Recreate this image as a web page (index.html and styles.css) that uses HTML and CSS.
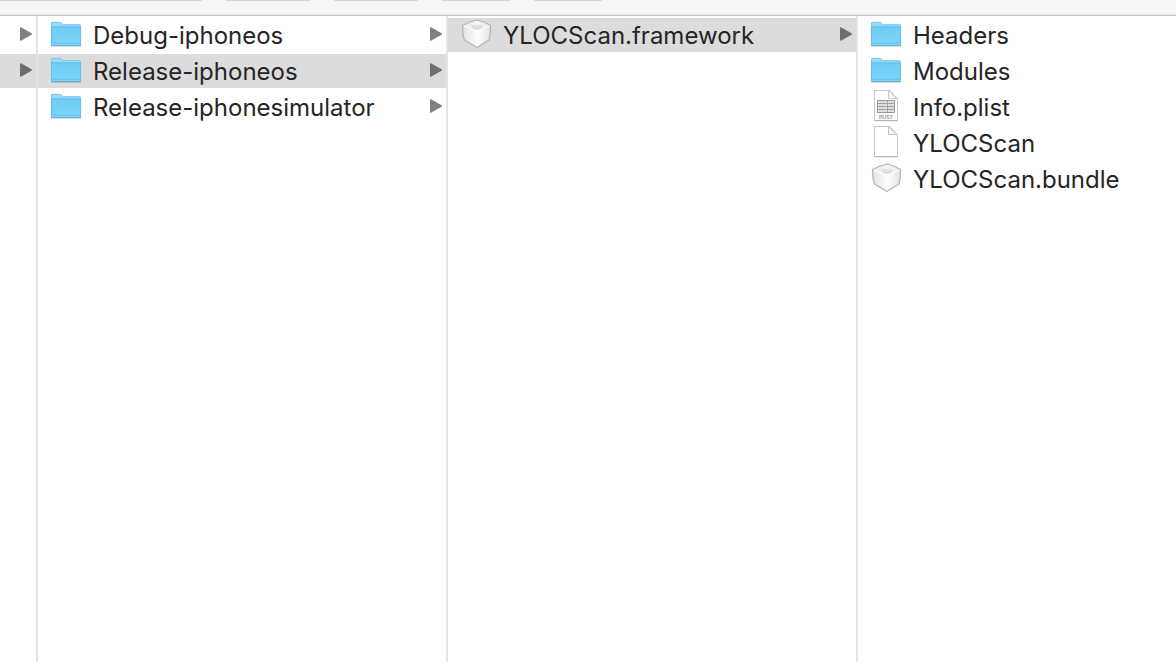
FILE: index.html
```html
<!DOCTYPE html>
<html lang="en">
<head>
<meta charset="utf-8">
<title>Finder</title>
<link rel="stylesheet" href="styles.css">
</head>
<body>
<svg class="defs" aria-hidden="true">
  <defs>
    <linearGradient id="folderFill" x1="0" y1="0" x2="0" y2="1">
      <stop offset="0" stop-color="#70cdf6"/><stop offset="1" stop-color="#7dd5fa"/>
    </linearGradient>
    <linearGradient id="leftFace" x1="0" y1="0" x2="1" y2="0">
      <stop offset="0" stop-color="#e2e2e2"/><stop offset="1" stop-color="#fbfbfb"/>
    </linearGradient>
    <linearGradient id="rightFace" x1="0" y1="0" x2="1" y2="0">
      <stop offset="0" stop-color="#fdfdfd"/><stop offset="1" stop-color="#e2e2e2"/>
    </linearGradient>
    <symbol id="folder" viewBox="0 0 32 32">
      <path d="M1 27.500h30V29H1z" fill="#000" opacity=".13"/>
      <path d="M1 27V5q0-1 1-1h8q1 0 1.600.8L13 6.300h17q1 0 1 1V27z" fill="#96dcfa"/>
      <path d="M1.500 9V5q0-.700.700-.700H10q.8 0 1.300.700L12.800 6.600H30" fill="none" stroke="#74c2e4" stroke-width=".7"/>
      <path d="M1 8.500h30V27q0 .7-.7.700H1.700Q1 27.700 1 27z" fill="url(#folderFill)"/>
      <path d="M1.400 8.500V27M30.600 8.500V27M1 8.800h30" stroke="#5fb9e3" stroke-width=".8" fill="none"/>
      <path d="M2 25.300h28" stroke="#5bbce8" stroke-width=".7"/>
      <path d="M1.300 27.500h29.400" stroke="#57a3c5" stroke-width=".8"/>
    </symbol>
    <symbol id="brick" viewBox="-1 0 32 32">
      <path d="M1.500 7.500 16 12.500v17L3.500 22Q1.500 18 1.500 7.500z" fill="url(#leftFace)"/>
      <path d="M16 12.500 29.500 7.500Q29.500 18 28 22L16 29.500z" fill="url(#rightFace)"/>
      <path d="M1.500 7.500 9 4.300 11 3.500 16 2.300l5 1.200 2 .8 6.500 3.200L16 12.500z" fill="#ededed"/>
      <path d="M11 8v2.500q5 2.500 10 0V8z" fill="#d9d9d9"/>
      <ellipse cx="16" cy="8" rx="5" ry="1.800" fill="#e2e2e2"/>
      <path d="M12.500 3.200 16 2.500l3.500.7v3.600h-7z" fill="#f6f6f6"/>
      <path d="M2.500 8 16 13l13-5" fill="none" stroke="#fff" stroke-width="1"/>
      <path d="M1.500 7.500 9 4l7-2 7 2 6.500 3.500Q29.500 18 28 22L16 29.500 3.500 22Q1.500 18 1.500 7.500z" fill="none" stroke="#b5b5b5" stroke-width="1.200" stroke-linejoin="round"/>
    </symbol>
    <symbol id="page" viewBox="0 0 32 32">
      <path d="M4.500.500h15.500L27.500 9v21.500h-23z" fill="#fff" stroke="#c6c6c6" stroke-width="1" stroke-linejoin="round"/>
      <path d="M4.500 30.700h23" stroke="#a9a9a9" stroke-width=".8"/>
      <path d="M18.500.800V8.500h8.500z" fill="#f8f8f8" stroke="#c2c2c2" stroke-width=".9" stroke-linejoin="round"/>
    </symbol>
    <symbol id="plist" viewBox="0 0 32 32">
      <use href="#page"/>
      <path d="M7.500 10.500h17v12h-17z" fill="#e9e9e9" stroke="#989898" stroke-width="1"/>
      <path d="M7.500 13.500h17M7.500 16.500h17M7.500 19.500h17M17.500 11v12" stroke="#a2a2a2" stroke-width="1"/>
      <path d="M9 12h6M9 15h7M9 18h6M9 21h7M19 12h4M19 15h3M19 18h4M19 21h3" stroke="#c6c6c6" stroke-width=".8"/>
      <text class="kind" x="16" y="29" text-anchor="middle">PLIST</text>
    </symbol>
    <symbol id="arrow" viewBox="0 0 12 14">
      <path d="M0 1Q0 0 1 .3L11.500 6.200q1 .8 0 1.600L1 13.700Q0 14 0 13z"/>
    </symbol>
  </defs>
</svg>
<div class="window">
  <header class="toolbar">
    <span class="edge path"></span><span class="edge wide"></span><span class="edge wide"></span><span class="edge"></span><span class="edge"></span>
  </header>
  <main class="browser">
    <section class="column parent" aria-label="Parent folder">
      <button class="row" aria-label="Expand first folder"><svg class="arrow"><use href="#arrow"/></svg></button>
      <button class="row selected" aria-label="Expand second folder"><svg class="arrow"><use href="#arrow"/></svg></button>
    </section>
    <section class="column" aria-label="Products">
      <button class="row"><svg class="icon"><use href="#folder"/></svg><span class="name">Debug-iphoneos</span><svg class="arrow"><use href="#arrow"/></svg></button>
      <button class="row selected"><svg class="icon"><use href="#folder"/></svg><span class="name">Release-iphoneos</span><svg class="arrow"><use href="#arrow"/></svg></button>
      <button class="row"><svg class="icon"><use href="#folder"/></svg><span class="name">Release-iphonesimulator</span><svg class="arrow"><use href="#arrow"/></svg></button>
    </section>
    <section class="column" aria-label="Release-iphoneos">
      <button class="row selected"><svg class="icon"><use href="#brick"/></svg><span class="name">YLOCScan.framework</span><svg class="arrow"><use href="#arrow"/></svg></button>
    </section>
    <section class="column last" aria-label="YLOCScan.framework">
      <button class="row"><svg class="icon"><use href="#folder"/></svg><span class="name">Headers</span></button>
      <button class="row"><svg class="icon"><use href="#folder"/></svg><span class="name">Modules</span></button>
      <button class="row"><svg class="icon"><use href="#plist"/></svg><span class="name">Info.plist</span></button>
      <button class="row"><svg class="icon"><use href="#page"/></svg><span class="name">YLOCScan</span></button>
      <button class="row"><svg class="icon"><use href="#brick"/></svg><span class="name">YLOCScan.bundle</span></button>
    </section>
  </main>
</div>
</body>
</html>
```
FILE: styles.css
```css
* {
  box-sizing: border-box;
}

body {
  margin: 0;
  background: #fff;
  color: #252525;
  font-family: Inter, "Liberation Sans", sans-serif;
  font-size: 24px;
}

.defs {
  position: absolute;
  width: 0;
  height: 0;
}

.window {
  display: flex;
  flex-direction: column;
  min-height: 100vh;
}

.toolbar {
  display: flex;
  gap: 24px;
  height: 16px;
  background: #f5f5f5;
  border-bottom: 1px solid #c9c9c9;
  box-shadow: inset 0 -1px #e6e6e6;
}

.edge {
  width: 68px;
  height: 1px;
  background: #d4d4d4;
}

.edge.wide {
  width: 84px;
}

.edge.path {
  width: 202px;
}

.browser {
  display: flex;
  flex: 1;
}

.column {
  display: flex;
  flex: 0 0 410px;
  flex-direction: column;
  gap: 2px;
  padding-top: 2px;
  border-right: 2px solid #e4e4e4;
}

.column.parent {
  flex-basis: 38px;
}

.column.last {
  flex: 1;
  border-right: 0;
}

.row {
  display: flex;
  align-items: center;
  width: 100%;
  height: 34px;
  padding: 0 4px 0 12px;
  border: 0;
  background: transparent;
  color: inherit;
  font: inherit;
  text-align: left;
}

.row.selected {
  background: #dcdcdc;
}

.icon {
  flex: none;
  width: 32px;
  height: 32px;
  margin-right: 11px;
  margin-bottom: 2px;
}

.name {
  flex: 1;
  white-space: nowrap;
}

.arrow {
  flex: none;
  width: 12px;
  height: 14px;
  margin-left: auto;
  margin-bottom: 2px;
  fill: #808080;
}

.selected .arrow {
  fill: #6e6e6e;
}

.kind {
  fill: #888;
  font-size: 5px;
  font-weight: 600;
}
```
